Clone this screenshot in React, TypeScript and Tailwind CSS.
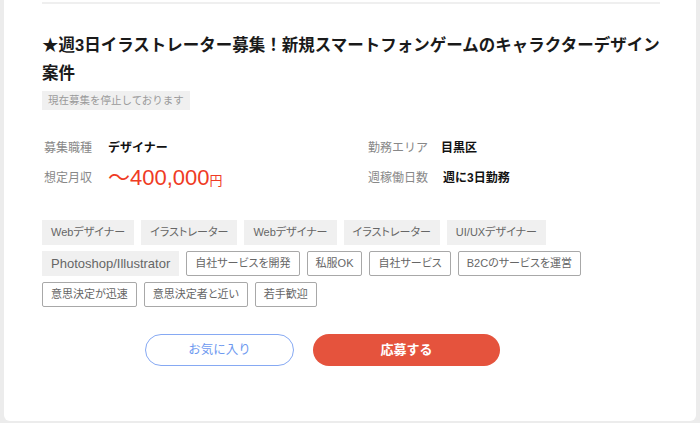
const tags: { label: string; filled: boolean; latin?: boolean }[] = [
  { label: "Webデザイナー", filled: true },
  { label: "イラストレーター", filled: true },
  { label: "Webデザイナー", filled: true },
  { label: "イラストレーター", filled: true },
  { label: "UI/UXデザイナー", filled: true },
  { label: "Photoshop/Illustrator", filled: true, latin: true },
  { label: "自社サービスを開発", filled: false },
  { label: "私服OK", filled: false },
  { label: "自社サービス", filled: false },
  { label: "B2Cのサービスを運営", filled: false },
  { label: "意思決定が迅速", filled: false },
  { label: "意思決定者と近い", filled: false },
  { label: "若手歓迎", filled: false },
];

const App = () => {
  return (
    <div
      className="min-h-screen w-full bg-[#ececec] px-[4px] pb-[2px]"
      style={{ fontFamily: '"Liberation Sans", "Noto Sans CJK JP", sans-serif' }}
    >
      <div className="bg-white rounded-b-md h-[421px] pl-[38px]">
        <div className="w-[618px]">
          <div className="pt-[2px]">
            <div className="h-[2px] bg-[#efefef]" />
          </div>

          <h1 className="mt-[27px] text-[16.5px] leading-[28px] font-bold text-[#1a1a1a]">
            ★週3日イラストレーター募集！新規スマートフォンゲームのキャラクターデザイン案件
          </h1>

          <div className="mt-[4px] inline-block h-[19px] bg-[#f0f0f0] px-[6px] text-[10.5px] leading-[19px] text-[#9a9a9a]">
            現在募集を停止しております
          </div>

          <div className="mt-[22px] flex">
            <div className="w-[326px] pl-[2px]">
              <div className="flex items-center h-[30px]">
                <span className="w-[64px] text-[12px] text-[#888]">募集職種</span>
                <span className="text-[12px] font-bold text-[#111]">デザイナー</span>
              </div>
              <div className="flex items-center h-[30px]">
                <span className="w-[64px] text-[12px] text-[#888]">想定月収</span>
                <span className="text-[#ef3b24] text-[22px] leading-none [font-feature-settings:'palt']">
                  〜400,000<span className="text-[13px]">円</span>
                </span>
              </div>
            </div>
            <div>
              <div className="flex items-center h-[30px]">
                <span className="w-[73px] text-[12px] text-[#888]">勤務エリア</span>
                <span className="text-[12px] font-bold text-[#111]">目黒区</span>
              </div>
              <div className="flex items-center h-[30px]">
                <span className="w-[75px] text-[12px] text-[#888]">週稼働日数</span>
                <span className="text-[12px] font-bold text-[#111]">週に3日勤務</span>
              </div>
            </div>
          </div>

          <div className="mt-[27px] flex flex-wrap gap-x-[7px] gap-y-[6px] w-[560px] [font-feature-settings:'palt']">
            {tags.map((t, i) => (
              <span
                key={i}
                className={
                  (t.filled
                    ? "h-[25px] px-[9px] leading-[25px] bg-[#f0f0f0] text-[#666]"
                    : "h-[25px] px-[8px] leading-[23px] border border-[#a8a8a8] rounded-[2px] text-[#666]") +
                  (t.latin ? " text-[13px]" : " text-[11px]")
                }
              >
                {t.label}
              </span>
            ))}
          </div>

          <div className="mt-[27px] pl-[103px] flex gap-[19px]">
            <button className="w-[149px] h-[32px] rounded-full border border-[#86a9f3] text-[#6e9af0] text-[12.5px]">
              お気に入り
            </button>
            <button className="w-[187px] h-[32px] rounded-full bg-[#e5533d] text-white text-[13px] font-bold">
              応募する
            </button>
          </div>
        </div>
      </div>
    </div>
  );
};

export default App;
